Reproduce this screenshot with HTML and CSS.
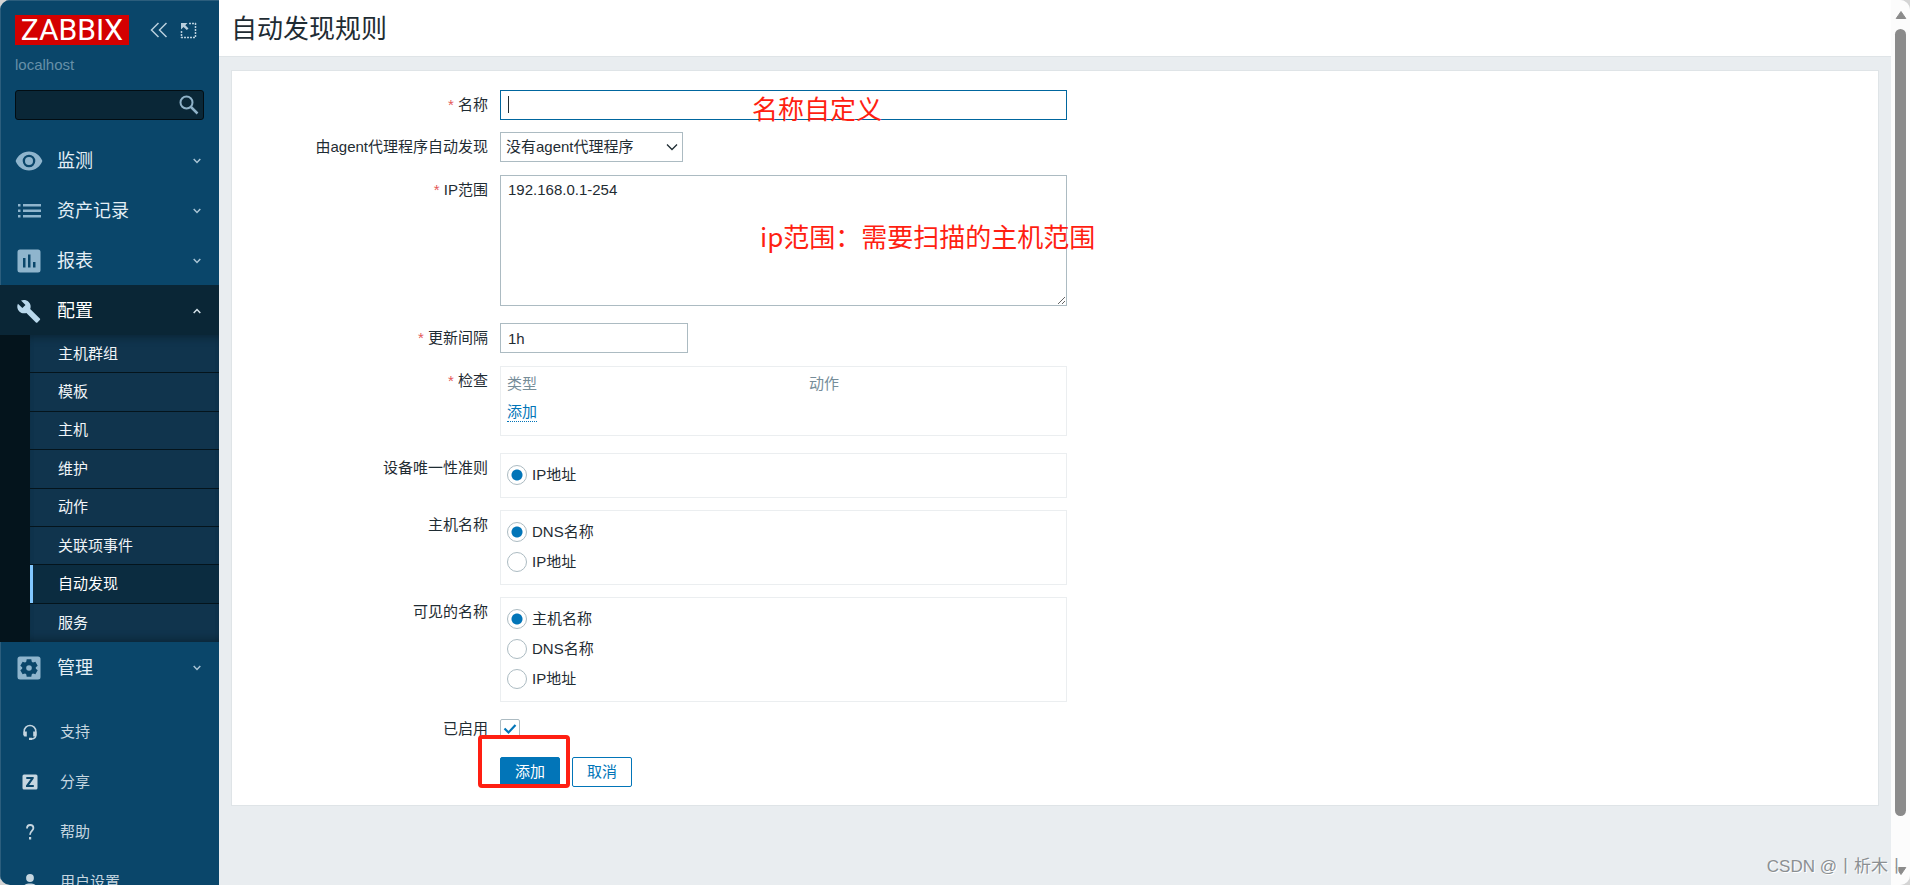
FILE: index.html
```html
<!DOCTYPE html>
<html lang="zh-CN">
<head>
<meta charset="utf-8">
<title>自动发现规则</title>
<link rel="stylesheet" href="styles.css">
</head>
<body>
<div class="app">
  <aside class="sidebar">
    <div class="brand">
      <a class="logo" href="#" aria-label="ZABBIX"><span>ZABBIX</span></a>
      <button class="tool" type="button" aria-label="收起"><svg width="18" height="16" viewBox="0 0 18 16"><path d="M8.500 1 1.500 8l7 7M16.500 1l-7 7 7 7" fill="none" stroke="currentColor" stroke-width="1.500"/></svg></button>
      <button class="tool" type="button" aria-label="隐藏"><svg width="17" height="17" viewBox="0 0 17 17"><path d="M9 1.500h7M15.500 1v15M1 15.500h15M1.500 9v7" fill="none" stroke="currentColor" stroke-width="1.500" stroke-dasharray="2 1"/><path d="M1 1h6.500L5.300 3.200l3.200 3.200-1.700 1.700-3.300-3.200L1 7.500z" fill="currentColor"/></svg></button>
    </div>
    <div class="server">localhost</div>
    <form class="search">
      <input type="text" aria-label="搜索">
      <button type="button" aria-label="搜索"><svg width="20" height="20" viewBox="0 0 20 20"><circle cx="7.500" cy="7.500" r="6" fill="none" stroke="currentColor" stroke-width="2"/><path d="m12 12 6.500 6.500" stroke="currentColor" stroke-width="2.500"/></svg></button>
    </form>
    <nav>
      <ul class="menu">
        <li><a class="menu-item" href="#"><svg class="icon" width="28" height="28" viewBox="0 0 28 28"><path fill="currentColor" fill-rule="evenodd" d="M14 4.500C7.800 4.500 2.700 8.400.600 14c2.100 5.600 7.200 9.500 13.400 9.500S25.300 19.600 27.400 14C25.300 8.400 20.200 4.500 14 4.500zM14 7.700a6.300 6.300 0 1 1 0 12.600 6.300 6.300 0 0 1 0-12.600z"/><circle cx="14" cy="14" r="4" fill="currentColor"/></svg><span>监测</span><svg class="chevron" width="8" height="6" viewBox="0 0 8 6"><path d="m.700 1 3.300 3.500L7.300 1"/></svg></a></li>
        <li><a class="menu-item" href="#"><svg class="icon" width="28" height="28" viewBox="0 0 28 28"><path fill="currentColor" d="M3 7h2.500v2.500H3zM3 12.500h2.500V15H3zM3 18h2.500v2.500H3zM8 7h18v2.500H8zM8 12.500h18V15H8zM8 18h18v2.500H8z"/></svg><span>资产记录</span><svg class="chevron" width="8" height="6" viewBox="0 0 8 6"><path d="m.700 1 3.300 3.500L7.300 1"/></svg></a></li>
        <li><a class="menu-item" href="#"><svg class="icon" width="28" height="28" viewBox="0 0 28 28"><path fill="currentColor" fill-rule="evenodd" d="M5 2.500h18a2.500 2.500 0 0 1 2.500 2.500v18a2.500 2.500 0 0 1-2.500 2.500H5A2.500 2.500 0 0 1 2.500 23V5A2.500 2.500 0 0 1 5 2.500zM8 11v9.500h2.500V11zM13 7.500v13h2.500v-13zM18 15v5.500h2.500V15z"/></svg><span>报表</span><svg class="chevron" width="8" height="6" viewBox="0 0 8 6"><path d="m.700 1 3.300 3.500L7.300 1"/></svg></a></li>
        <li class="open"><a class="menu-item" href="#"><svg class="icon" width="28" height="28" viewBox="0 0 28 28"><path fill="currentColor" d="m24.800 21.600-9.600-9.500c1-2.400.400-5.200-1.500-7.100C11.600 2.900 8.500 2.500 6 3.600l4.500 4.400-3.100 3.100L2.900 6.700C1.700 9.100 2.200 12.300 4.300 14.400c1.900 1.900 4.700 2.400 7.100 1.500l9.500 9.500c.400.400 1.100.400 1.500 0l2.400-2.400c.500-.300.500-1 0-1.400z"/></svg><span>配置</span><svg class="chevron" width="8" height="6" viewBox="0 0 8 6"><path d="M.700 5 4 1.500 7.300 5"/></svg></a>
          <ul class="submenu">
            <li><a href="#">主机群组</a></li>
            <li><a href="#">模板</a></li>
            <li><a href="#">主机</a></li>
            <li><a href="#">维护</a></li>
            <li><a href="#">动作</a></li>
            <li><a href="#">关联项事件</a></li>
            <li class="selected"><a href="#" aria-current="page">自动发现</a></li>
            <li><a href="#">服务</a></li>
          </ul>
        </li>
        <li><a class="menu-item" href="#"><svg class="icon" width="28" height="28" viewBox="0 0 28 28"><rect x="2.500" y="2.500" width="23" height="23" rx="2.500" fill="currentColor"/><g class="cog"><circle cx="14" cy="14" r="6.800"/><path d="M11.700 5.300h4.600l.700 4h-6zM11.700 22.700h4.600l.700-4h-6z"/><path d="M11.700 5.300h4.600l.700 4h-6zM11.700 22.700h4.600l.700-4h-6z" transform="rotate(60 14 14)"/><path d="M11.700 5.300h4.600l.700 4h-6zM11.700 22.700h4.600l.700-4h-6z" transform="rotate(120 14 14)"/></g><circle cx="14" cy="14" r="2.800" fill="currentColor"/></svg><span>管理</span><svg class="chevron" width="8" height="6" viewBox="0 0 8 6"><path d="m.700 1 3.300 3.500L7.300 1"/></svg></a></li>
      </ul>
      <ul class="menu-user">
        <li><a href="#"><svg width="16" height="16" viewBox="0 0 16 16"><path d="M2.200 11V7.200a5.800 5.800 0 0 1 11.600 0V11c0 2.500-1.500 3.700-4 3.900" fill="none" stroke="currentColor" stroke-width="1.500"/><path d="M1.500 7.500h3.300v5H3a1.500 1.500 0 0 1-1.500-1.500zM11.200 7.500h3.300V11a1.500 1.500 0 0 1-1.500 1.500h-1.800zM7 13.800h3V16H7z" fill="currentColor"/></svg>支持</a></li>
        <li><a href="#"><svg width="16" height="16" viewBox="0 0 16 16"><path fill="currentColor" fill-rule="evenodd" d="M2 .500h12A1.500 1.500 0 0 1 15.500 2v12a1.500 1.500 0 0 1-1.500 1.500H2A1.500 1.500 0 0 1 .500 14V2A1.500 1.500 0 0 1 2 .500zM4.300 3v2h4.400L4 11.400V13h7.800v-2H7.100l4.600-6.400V3z"/></svg>分享</a></li>
        <li><a href="#"><svg width="16" height="16" viewBox="0 0 16 16"><path d="M5 4.500C5 2.300 6.300 1 8.200 1s3.200 1.200 3.200 3C11.400 6.800 8 7 8 10.700" fill="none" stroke="currentColor" stroke-width="1.800"/><path d="M7 13h2.200v2.500H7z" fill="currentColor"/></svg>帮助</a></li>
        <li><a href="#"><svg width="16" height="16" viewBox="0 0 16 16"><circle cx="8" cy="4" r="3.900" fill="currentColor"/><path d="M1 16v-2.500C1 10.800 5 9.500 8 9.500s7 1.300 7 4V16z" fill="currentColor"/></svg>用户设置</a></li>
      </ul>
    </nav>
  </aside>

  <main class="main">
    <header class="page-header"><h1>自动发现规则</h1></header>
    <form class="card">
      <div class="row">
        <label class="label required" for="name">名称</label>
        <div class="field">
          <input class="text focused" id="name" type="text">
          <span class="caret"></span>
          <span class="note note-name">名称自定义</span>
        </div>
      </div>
      <div class="row spaced">
        <label class="label" for="proxy">由agent代理程序自动发现</label>
        <div class="field field-select">
          <select id="proxy"><option>没有agent代理程序</option></select>
          <svg class="select-arrow" width="12" height="8" viewBox="0 0 12 8"><path d="m1 1.500 5 5 5-5" fill="none" stroke="currentColor" stroke-width="1.300"/></svg>
        </div>
      </div>
      <div class="row spaced-more">
        <label class="label required" for="range">IP范围</label>
        <div class="field">
          <textarea id="range">192.168.0.1-254</textarea>
          <span class="note note-range">ip范围：需要扫描的主机范围</span>
        </div>
      </div>
      <div class="row spaced">
        <label class="label required" for="delay">更新间隔</label>
        <div class="field"><input class="text short" id="delay" type="text" value="1h"></div>
      </div>
      <div class="row spaced-more">
        <span class="label required">检查</span>
        <div class="field box checks">
          <table>
            <thead><tr><th>类型</th><th>动作</th></tr></thead>
            <tbody><tr><td colspan="2"><button class="link" type="button">添加</button></td></tr></tbody>
          </table>
        </div>
      </div>
      <div class="row">
        <span class="label">设备唯一性准则</span>
        <div class="field box radios">
          <label><input type="radio" name="unique" checked>IP地址</label>
        </div>
      </div>
      <div class="row">
        <span class="label">主机名称</span>
        <div class="field box radios">
          <label><input type="radio" name="host" checked>DNS名称</label>
          <label><input type="radio" name="host">IP地址</label>
        </div>
      </div>
      <div class="row">
        <span class="label">可见的名称</span>
        <div class="field box radios">
          <label><input type="radio" name="visible" checked>主机名称</label>
          <label><input type="radio" name="visible">DNS名称</label>
          <label><input type="radio" name="visible">IP地址</label>
        </div>
      </div>
      <div class="row spaced">
        <label class="label" for="enabled">已启用</label>
        <div class="field check">
          <input id="enabled" type="checkbox" checked>
          <svg class="tick" width="14" height="12" viewBox="0 0 14 12"><path d="m1.500 5.500 4 4 7-7.500" fill="none" stroke="currentColor" stroke-width="2.200"/></svg>
        </div>
      </div>
      <div class="row">
        <span class="label"></span>
        <div class="field actions">
          <button class="btn primary" type="button">添加</button>
          <button class="btn" type="button">取消</button>
          <span class="highlight"></span>
        </div>
      </div>
    </form>
  </main>

  <div class="scrollbar">
    <svg width="12" height="10" viewBox="0 0 12 10"><path d="M6 1.500 10.800 8.500H1.200z" fill="currentColor" stroke="currentColor" stroke-linejoin="round"/></svg>
    <div class="track"><div class="thumb"></div></div>
    <svg width="12" height="10" viewBox="0 0 12 10"><path d="M6 8.500 1.200 1.500h9.600z" fill="currentColor" stroke="currentColor" stroke-linejoin="round"/></svg>
  </div>
  <div class="watermark">CSDN @丨析木丨</div>
</div>
</body>
</html>
```

FILE: styles.css
```css
* { box-sizing: border-box; }

body {
  margin: 0;
  background: #d4d4d4;
  color: #1f2c33;
  font: 15px/20px "Liberation Sans", Arial, "Noto Sans CJK SC", sans-serif;
}

button, input, select, textarea { font: inherit; color: inherit; margin: 0; }
button { cursor: pointer; }
a { color: inherit; text-decoration: none; }
ul { list-style: none; margin: 0; padding: 0; }
svg { display: block; flex: none; }

.app {
  position: relative;
  display: flex;
  height: 100vh;
  overflow: hidden;
  border-radius: 10px;
  background: #e9edf0;
}

/* Sidebar */
.sidebar {
  flex: none;
  width: 219px;
  overflow: hidden;
  background: #0a466a;
  box-shadow: inset 1px 1px #2c5e7d;
}

.brand { display: flex; align-items: center; padding: 15px 15px 0; }
.logo {
  display: flex;
  align-items: center;
  justify-content: center;
  width: 114px;
  height: 30px;
  margin-right: 21px;
  background: #d40000;
  color: #fff;
  font-family: Roboto, sans-serif;
  font-size: 30px;
  line-height: 30px;
}
.tool {
  display: flex;
  margin-right: 12px;
  padding: 0;
  border: 0;
  background: none;
  color: #b9cfdd;
}
.tool:last-child { margin-right: 0; }

.server { padding: 10px 15px 0; color: #6690a8; }

.search {
  display: flex;
  align-items: center;
  height: 30px;
  margin: 15px;
  border: 1px solid #020d13;
  border-radius: 3px;
  background: #0a2737;
}
.search input {
  flex: 1;
  min-width: 0;
  height: 28px;
  padding: 0 8px;
  border: 0;
  background: none;
  color: #fff;
  outline: 0;
}
.search button { padding: 0 4px; border: 0; background: none; color: #8fb2c8; }

.menu-item {
  display: flex;
  align-items: center;
  height: 50px;
  padding: 1px 18px 0 15px;
  color: #e4eff6;
  font-size: 18px;
}
.menu-item span { flex: 1; margin-left: 14px; }
.icon { color: #8fb5cd; }
.cog { fill: #0a466a; }
.chevron path { fill: none; stroke: #a9c4d5; stroke-width: 1.500; }
.open .menu-item { background: #0a2636; color: #fff; }
.open .icon { color: #b9d8ec; }
.open .chevron path { stroke: #d5e2ea; }

.submenu {
  display: grid;
  grid-auto-rows: 1fr;
  min-height: 307px;
  border-left: 30px solid #04141c;
  background: #10344d;
  box-shadow: inset 0 8px 8px -6px #0a2434, inset 0 -8px 8px -6px #0a2434;
}
.submenu li { display: flex; border-bottom: 1px solid #04141c; }
.submenu li:last-child { border-bottom: 0; }
.submenu a { flex: 1; display: flex; align-items: center; padding-left: 28px; color: #f0f5f8; }
.submenu .selected { background: #0b2c40; }
.submenu .selected a { padding-left: 25px; border-left: 3px solid #82c8ff; color: #fff; }

.menu-user { padding-top: 15px; }
.menu-user a {
  display: flex;
  align-items: center;
  gap: 22px;
  height: 50px;
  padding-left: 22px;
  color: #c6d6e0;
}

/* Page */
.main { flex: 1; min-width: 0; }
.page-header {
  display: flex;
  align-items: center;
  height: 57px;
  padding: 2px 12px 0;
  border-bottom: 1px solid #dfe4e7;
  background: #fff;
}
.page-header h1 { margin: 0; font-size: 26px; font-weight: 400; line-height: 36px; }

.card {
  display: flex;
  flex-direction: column;
  gap: 12px;
  margin: 13px 12px 0;
  padding: 19px 0 18px;
  border: 1px solid #dfe4e7;
  background: #fff;
}
.row { display: flex; gap: 12px; }
.spaced { padding-bottom: 1px; }
.spaced-more { padding-bottom: 5px; }
.label { flex: none; width: 256px; line-height: 30px; text-align: right; }
.required::before { content: "* "; color: #e45959; }
.field { position: relative; width: 567px; }

.text, select, textarea {
  display: block;
  width: 100%;
  height: 30px;
  padding: 0 7px;
  border: 1px solid #acbbc2;
  border-radius: 0;
  background: #fff;
  outline: 0;
}
.focused { border-color: #00669e; }
.short { width: 188px; }
.caret { position: absolute; left: 8px; top: 6px; width: 1px; height: 17px; background: #1f2c33; }

.field-select { width: 183px; }
select { padding: 0 5px; appearance: none; }
.select-arrow { position: absolute; right: 5px; top: 11px; pointer-events: none; }
textarea { height: 131px; padding: 4px 7px; resize: both; }

.box { border: 1px solid #ebeef0; }
.checks { padding: 3px 6px 9px; }
.checks table { width: 100%; border-collapse: collapse; table-layout: fixed; }
.checks th, .checks td { height: 28px; padding: 0; font-weight: 400; text-align: left; }
.checks th { color: #768d99; }
.checks th:first-child { width: 302px; }
.link {
  padding: 0;
  border: 0;
  border-bottom: 1px dotted #0275b8;
  background: none;
  color: #0275b8;
  line-height: 18px;
}

.radios { padding: 6px 6px 7px; }
.radios label { display: flex; align-items: center; gap: 5px; height: 30px; }
.radios input {
  appearance: none;
  width: 20px;
  height: 20px;
  border: 1px solid #acbbc2;
  border-radius: 50%;
  background: #fff;
}
.radios input:checked { background: radial-gradient(circle, #0275b8 5px, #fff 6px); }

.check { display: flex; align-items: center; height: 30px; }
.check input {
  appearance: none;
  width: 20px;
  height: 20px;
  border: 1px solid #acbbc2;
  border-radius: 2px;
}
.tick { position: absolute; left: 3px; top: 9px; color: #0275b8; pointer-events: none; }

.actions { display: flex; gap: 12px; }
.btn {
  width: 60px;
  height: 30px;
  padding: 0;
  border: 1px solid #0275b8;
  border-radius: 2px;
  background: #fff;
  color: #0275b8;
}
.primary { background: #0275b8; color: #fff; }

/* Annotations */
.note {
  position: absolute;
  color: #ff1f12;
  font: 26px/36px "Noto Sans CJK SC", sans-serif;
  white-space: nowrap;
  pointer-events: none;
}
.note-name { left: 252px; top: 0; }
.note-range { left: 260px; top: 43px; }
.highlight {
  position: absolute;
  left: -22px;
  top: -22px;
  width: 92px;
  height: 53px;
  border: 4px solid #ff1f12;
  border-radius: 4px;
  pointer-events: none;
}

/* Window scrollbar */
.scrollbar {
  flex: none;
  display: flex;
  flex-direction: column;
  align-items: center;
  gap: 9px;
  width: 19px;
  padding: 10px 0 9px;
  background: #fcfcfc;
  color: #8b8b8b;
}
.track { flex: 1; }
.thumb { width: 11px; height: 95%; border-radius: 6px; background: #8b8b8b; }

.watermark {
  position: absolute;
  right: 5px;
  bottom: 4px;
  color: #8b8f92;
  font-size: 17px;
  line-height: 28px;
  text-shadow: 1px 1px #fff;
}
```
